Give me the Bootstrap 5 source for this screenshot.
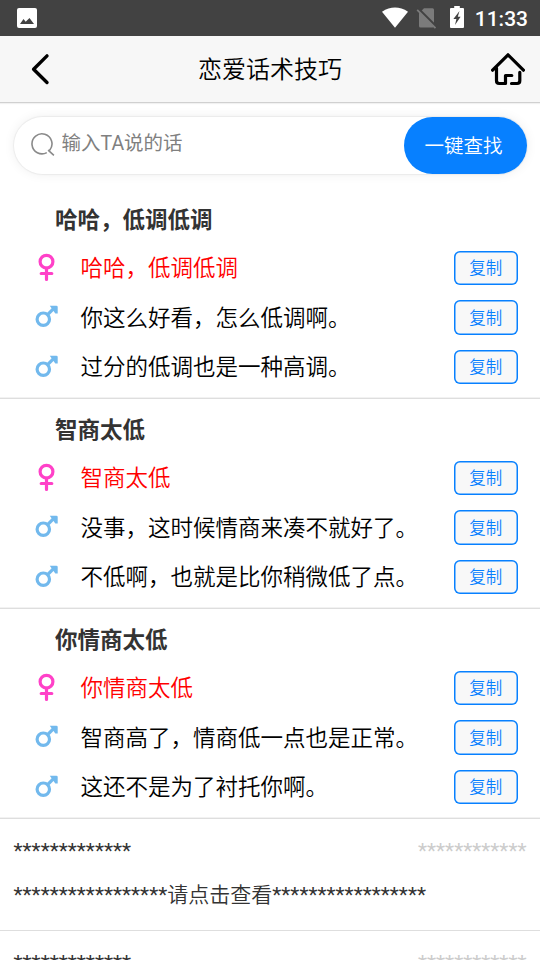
<!DOCTYPE html>
<html lang="zh-CN">
<head>
<meta charset="utf-8">
<meta name="viewport" content="width=device-width, initial-scale=1">
<title>恋爱话术技巧</title>
<link href="https://cdn.jsdelivr.net/npm/bootstrap@5.3.0/dist/css/bootstrap.min.css" rel="stylesheet">
<style>
body{font-family:Roboto,"Noto Sans CJK SC",sans-serif;height:960px;overflow:hidden;color:#000;background:#fff}
svg{display:block;flex:none}
.status-bar{height:36px;background:#424242;padding:0 12px 0 17px}
.battery{margin:0 0 2px 12px}
.clock{font-size:21px;font-weight:500;line-height:36px;margin-left:11px;padding-top:1px}
.title-bar{height:67px;background:#f7f7f7;border-bottom:1px solid #d0d0d0;box-shadow:0 1px 1px #f1f1f1;padding:0 14px 0 14px}
.page-title{font-size:24px;font-weight:350;line-height:36px;padding-top:2px}
.search-pill{height:57px;margin:14px 13.5px 1px;border-radius:29px;box-shadow:0 0 1px 1px rgba(0,0,0,.05),0 0 12px rgba(0,0,0,.07);padding-left:17px}
.search-icon{margin-bottom:4px}
.search-input{font-size:19.5px;line-height:28px;padding:0 0 4px 7px;outline:0}
.search-input::placeholder{color:#808080;opacity:1}
.search-btn{width:123px;height:57px;border-radius:29px;background:#0780ff;color:#fff;font-size:19.5px;font-weight:350;padding:2px 3px 0 0}
.talks{padding-top:14px}
.talk{height:210px;border-bottom:1px solid #dedede;box-shadow:0 -1px 0 #f2f2f2 inset;padding-top:6px}
.talk-title{height:48px;line-height:50px;font-size:22.5px;font-weight:700;color:#333;padding-left:55px}
.line{height:49.5px;padding:0 22.5px 0 34px;font-size:22.5px}
.line-text{margin-left:21.5px;padding-top:2.5px;font-weight:350}
.line.female .line-text{color:#f00}
.copy-btn{width:63.5px;height:34.5px;border:0;box-shadow:inset 0 0 0 1.5px #0780ff;border-radius:6px;background:#f8f8f8;color:#0780ff;font-size:16.5px;font-weight:350;line-height:34px;padding:1.5px 0 0}
.locked{height:112px;border-bottom:1px solid #dedede;padding:17px 13.5px 0;font-size:21px;line-height:31px;color:#333}
.locked-body{margin-top:13px}
.locked-hint{font-weight:350}
.faded{color:#ccc}
</style>
</head>
<body>
<svg width="0" height="0" class="position-absolute">
  <symbol id="female" viewBox="0 0 25 30"><g fill="none" stroke="#ff41c8" stroke-width="3.2" stroke-linecap="round"><circle cx="12.5" cy="8.7" r="6.4"/><path d="M12.5 15.2v11.2M7.2 20.5h10.6"/></g></symbol>
  <symbol id="male" viewBox="0 0 25 30"><g fill="none" stroke="#72b9ed" stroke-width="3.2"><circle cx="9.3" cy="17.2" r="6.2"/><path d="M13.6 12.7l6-6"/></g><path d="M15.8 3.8h6.6a1.3 1.3 0 0 1 1.3 1.3v6.5h-2.4z" fill="#72b9ed"/></symbol>
</svg>

<div class="status-bar d-flex align-items-center text-white">
  <svg width="20" height="20" viewBox="0 0 20 20"><rect width="20" height="20" rx="2" fill="#fff"/><path d="M3 16l3.5-5 2.2 2.7L12.5 10l4.5 6z" fill="#424242"/></svg>
  <div class="ms-auto d-flex align-items-center">
    <svg width="26" height="22" viewBox="0 0 26 22"><path d="M0 4.7Q13-3.7 26 4.7L13 20.8z" fill="#fff"/></svg>
    <svg class="ms-2" width="22" height="22" viewBox="0 0 22 22"><path d="M8 1.3h8.5A1.5 1.5 0 0 1 18 2.8V19a1.5 1.5 0 0 1-1.5 1.5h-12A1.5 1.5 0 0 1 3 19V6.3z" fill="#7b7b7b"/><path d="M2 1.5l18.5 18.5" stroke="#424242" stroke-width="2.5"/><path d="M1.2 2.8l18.3 18.4" stroke="#7b7b7b" stroke-width="1.8"/></svg>
    <svg class="battery" width="14" height="22" viewBox="0 0 14 22"><path d="M4.2 0h5.6v2H13a1 1 0 0 1 1 1v18a1 1 0 0 1-1 1H1a1 1 0 0 1-1-1V3a1 1 0 0 1 1-1h3.2z" fill="#fff"/><path d="M9.5 5L3.4 13h3L5 19l5.6-8.3H7.8z" fill="#424242"/></svg>
    <span class="clock">11:33</span>
  </div>
</div>

<header class="title-bar d-flex align-items-center justify-content-between">
  <svg width="36" height="34" viewBox="0 0 36 34"><path d="M33 3.9L19.6 17.2 33 30.5" fill="none" stroke="#000" stroke-width="3.4" stroke-linecap="round" stroke-linejoin="round"/></svg>
  <h1 class="page-title m-0">恋爱话术技巧</h1>
  <svg width="36" height="34" viewBox="0 0 36 34"><path d="M2.6 18.2L18 2.8l15.4 15.4M6.5 16v12.8q0 2.7 2.7 2.7h6.3v-8h6.3M29.8 20.3v8.5q0 2.7-2.7 2.7h-5.6" fill="none" stroke="#000" stroke-width="3.2" stroke-linecap="round" stroke-linejoin="round"/></svg>
</header>

<div class="search-pill d-flex align-items-center bg-white">
  <svg class="search-icon" width="24" height="24" viewBox="0 0 24 24"><path d="M15.8 20.6A10 10 0 1 1 18.7 18.2M18.5 17.8l-.8.9 5.2 4.7" fill="none" stroke="#8a8a8a" stroke-width="1.6"/></svg>
  <input class="search-input border-0 bg-transparent flex-grow-1" type="text" placeholder="输入TA说的话">
  <button class="search-btn btn">一键查找</button>
</div>

<main class="talks">
  <section class="talk">
    <h2 class="talk-title m-0">哈哈，低调低调</h2>
    <div class="line female d-flex align-items-center"><svg width="25" height="30"><use href="#female"/></svg><span class="line-text">哈哈，低调低调</span><button class="copy-btn btn ms-auto">复制</button></div>
    <div class="line d-flex align-items-center"><svg width="25" height="30"><use href="#male"/></svg><span class="line-text">你这么好看，怎么低调啊。</span><button class="copy-btn btn ms-auto">复制</button></div>
    <div class="line d-flex align-items-center"><svg width="25" height="30"><use href="#male"/></svg><span class="line-text">过分的低调也是一种高调。</span><button class="copy-btn btn ms-auto">复制</button></div>
  </section>
  <section class="talk">
    <h2 class="talk-title m-0">智商太低</h2>
    <div class="line female d-flex align-items-center"><svg width="25" height="30"><use href="#female"/></svg><span class="line-text">智商太低</span><button class="copy-btn btn ms-auto">复制</button></div>
    <div class="line d-flex align-items-center"><svg width="25" height="30"><use href="#male"/></svg><span class="line-text">没事，这时候情商来凑不就好了。</span><button class="copy-btn btn ms-auto">复制</button></div>
    <div class="line d-flex align-items-center"><svg width="25" height="30"><use href="#male"/></svg><span class="line-text">不低啊，也就是比你稍微低了点。</span><button class="copy-btn btn ms-auto">复制</button></div>
  </section>
  <section class="talk">
    <h2 class="talk-title m-0">你情商太低</h2>
    <div class="line female d-flex align-items-center"><svg width="25" height="30"><use href="#female"/></svg><span class="line-text">你情商太低</span><button class="copy-btn btn ms-auto">复制</button></div>
    <div class="line d-flex align-items-center"><svg width="25" height="30"><use href="#male"/></svg><span class="line-text">智商高了，情商低一点也是正常。</span><button class="copy-btn btn ms-auto">复制</button></div>
    <div class="line d-flex align-items-center"><svg width="25" height="30"><use href="#male"/></svg><span class="line-text">这还不是为了衬托你啊。</span><button class="copy-btn btn ms-auto">复制</button></div>
  </section>
  <section class="locked">
    <div class="d-flex justify-content-between"><span>*************</span><span class="faded">************</span></div>
    <div class="locked-body">*****************<span class="locked-hint">请点击查看</span>*****************</div>
  </section>
  <section class="locked">
    <div class="d-flex justify-content-between"><span>*************</span><span class="faded">************</span></div>
  </section>
</main>
<script src="https://cdn.jsdelivr.net/npm/bootstrap@5.3.0/dist/js/bootstrap.bundle.min.js"></script>
</body>
</html>
